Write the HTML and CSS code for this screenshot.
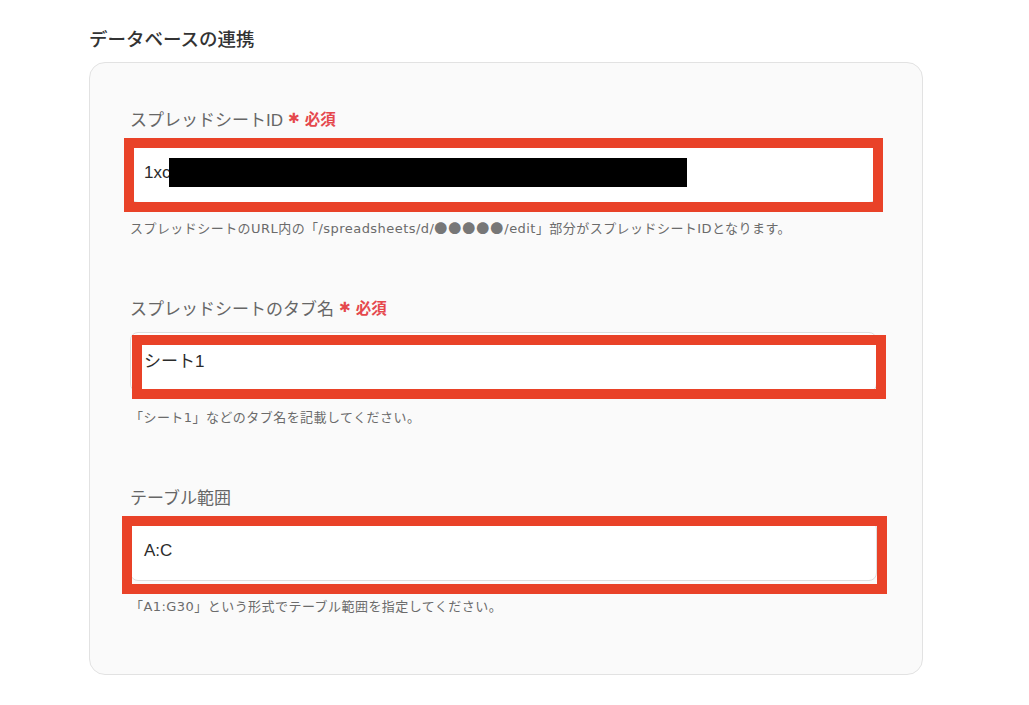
FILE: index.html
```html
<!doctype html>
<html lang="ja">
<head>
    <meta charset="UTF-8">
    <title>データベースの連携</title>
    <link rel="stylesheet" href="styles.css">
</head>
<body>
    <div id="page">
        <h2 class="title">データベースの連携</h2>
        <div class="card">
            <div class="field">
                <label class="label">スプレッドシートID<span class="req"><i>✱</i>必須</span></label>
                <div class="box">
                    <div class="input">1xc</div>
                    <span class="mask"></span>
                    <span class="mark mark-1"></span>
                </div>
                <p class="help">スプレッドシートのURL内の「/spreadsheets/d/<span class="dots">●●●●●</span>/edit」部分がスプレッドシートIDとなります。</p>
            </div>
            <div class="field">
                <label class="label">スプレッドシートのタブ名<span class="req"><i>✱</i>必須</span></label>
                <div class="box">
                    <div class="input">シート1</div>
                    <span class="mark mark-2"></span>
                </div>
                <p class="help">「シート1」などのタブ名を記載してください。</p>
            </div>
            <div class="field">
                <label class="label">テーブル範囲</label>
                <div class="box">
                    <div class="input">A:C</div>
                    <span class="mark mark-3"></span>
                </div>
                <p class="help">「A1:G30」という形式でテーブル範囲を指定してください。</p>
            </div>
        </div>
    </div>
</body>
</html>
```

FILE: styles.css
```css
*{
    margin:0;
    padding:0;
    box-sizing: border-box;
}
body{
    background: #ffffff;
    font-family: "Liberation Sans", "Noto Sans CJK JP", sans-serif;
    color: #333333;
}
#page{
    padding: 26px 0 0 89px;
}
.title{
    font-size: 18.5px;
    line-height: 24px;
    font-weight: 500;
    color: #333333;
    margin-bottom: 12px;
    font-family: "Noto Sans CJK JP", sans-serif;
}
.card{
    width: 834px;
    height: 613px;
    background: #fafafa;
    border: 1px solid #e2e2e2;
    border-radius: 16px;
    padding: 43px 45px 0 40px;
}
.field{
    margin-bottom: 57px;
}
.label{
    display: flex;
    align-items: center;
    height: 24px;
    font-size: 17px;
    font-weight: 400;
    color: #666666;
}
.req{
    display: flex;
    align-items: center;
    margin-left: 5px;
    font-size: 15.5px;
    font-weight: 700;
    color: #e5484d;
}
.req i{
    font-style: normal;
    font-family: "DejaVu Sans", sans-serif;
    font-size: 14px;
    margin-right: 5px;
}
.box{
    position: relative;
    margin-top: 13px;
}
.input{
    height: 60px;
    background: #ffffff;
    border: 1px solid #dedede;
    border-radius: 8px;
    padding: 0 13px;
    font-size: 17px;
    line-height: 58px;
    color: #2b2b2b;
}
.mask{
    position: absolute;
    left: 39px;
    top: 15px;
    width: 518px;
    height: 29px;
    background: #000000;
}
.mark{
    position: absolute;
    border: 10px solid #e94228;
}
.mark-1{
    left: -6px;
    top: -5px;
    width: 759px;
    height: 74px;
}
.mark-2{
    left: 2px;
    top: 3px;
    width: 754px;
    height: 64px;
}
.mark-3{
    left: -8px;
    top: -5px;
    width: 765px;
    height: 78px;
}
.help{
    margin-top: 17px;
    height: 18px;
    font-family: "DejaVu Sans", "Noto Sans CJK JP", sans-serif;
    font-size: 13px;
    line-height: 18px;
    letter-spacing: 0.45px;
    color: #6b6b6b;
}
.dots{
    font-family: "Noto Sans CJK JP", sans-serif;
    line-height: 1;
    letter-spacing: 1px;
    color: #777777;
}
```
